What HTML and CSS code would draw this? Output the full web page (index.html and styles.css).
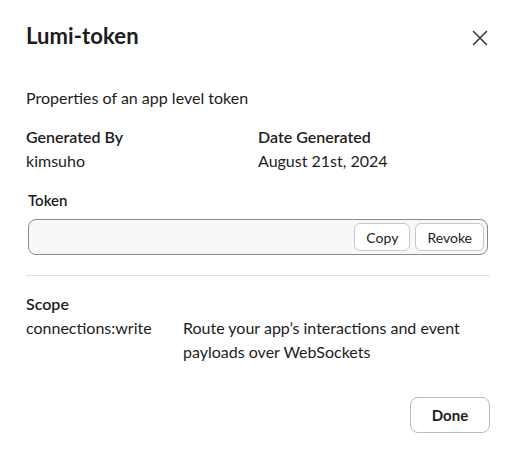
FILE: index.html
```html
<!DOCTYPE html>
<html>
<head>
<meta charset="utf-8">
<link rel="stylesheet" href="styles.css">
</head>
<body>
<div class="modal">
  <div class="header">
    <h1 class="title">Lumi-token</h1>
    <button class="close" aria-label="Close">
      <svg width="16" height="16" viewBox="0 0 16 16"><path d="M1.5 1.5 L14.5 14.5 M14.5 1.5 L1.5 14.5" stroke="#3a3a3a" stroke-width="1.6" stroke-linecap="round" fill="none"/></svg>
    </button>
  </div>
  <p class="desc">Properties of an app level token</p>
  <div class="meta">
    <div class="meta-col">
      <div class="label">Generated By</div>
      <div class="value">kimsuho</div>
    </div>
    <div class="meta-col">
      <div class="label">Date Generated</div>
      <div class="value">August 21st, 2024</div>
    </div>
  </div>
  <div class="token">
    <div class="label">Token</div>
    <div class="token-box">
      <div class="token-value"></div>
      <button class="btn-sm">Copy</button>
      <button class="btn-sm">Revoke</button>
    </div>
  </div>
  <hr class="divider">
  <div class="scope">
    <div class="label">Scope</div>
    <div class="scope-row">
      <div class="scope-name">connections:write</div>
      <div class="scope-desc">Route your app’s interactions and event payloads over WebSockets</div>
    </div>
  </div>
  <div class="footer">
    <button class="done">Done</button>
  </div>
</div>
</body>
</html>
```
FILE: styles.css
```css
* { box-sizing: border-box; }
html, body { margin: 0; padding: 0; background: #fff; }
body {
  font-family: Lato, "Noto Sans", sans-serif;
  color: #1d1c1d;
  width: 515px;
  height: 453px;
  overflow: hidden;
}
.modal {
  padding: 20px 25px 0 26px;
}
.header {
  display: flex;
  justify-content: space-between;
  align-items: center;
  height: 30px;
}
.title {
  margin: 0;
  font-size: 22px;
  font-weight: 700;
  letter-spacing: 0.1px;
}
.close {
  border: none;
  background: none;
  padding: 0;
  width: 16px;
  height: 16px;
  margin-right: 2px;
  margin-top: 6px;
  display: flex;
}
.desc {
  margin: 37px 0 0;
  font-size: 16px;
  line-height: 22px;
}
.meta {
  display: grid;
  grid-template-columns: 232px 1fr;
  margin-top: 17px;
}
.label {
  font-size: 16px;
  font-weight: 600;
  line-height: 22px;
}
.value {
  font-size: 16px;
  line-height: 26px;
}
.token {
  margin-top: 16px;
  padding-left: 2px;
}
.token .label { line-height: 20px; font-size: 15px; }
.token-box {
  margin-top: 9px;
  width: 460px;
  height: 36px;
  border: 1px solid #8a8a8a;
  border-radius: 8px;
  background: #f8f8f8;
  display: flex;
  align-items: center;
  gap: 5px;
  padding: 0 3px 0 0;
}
.token-value { flex: 1; }
.btn-sm {
  font-family: Lato, sans-serif;
  font-size: 14px;
  color: #1d1c1d;
  background: #fff;
  border: 1px solid #c8c8c8;
  border-radius: 6px;
  height: 28px;
  padding: 0 11px;
}
.divider {
  border: none;
  border-top: 1px solid #e2e2e2;
  margin: 20px 0 0;
  width: 464px;
}
.scope {
  margin-top: 18px;
}
.scope .label { line-height: 20px; }
.scope-row {
  display: grid;
  grid-template-columns: 157px 1fr;
  font-size: 16px;
  line-height: 24px;
  margin-top: 2px;
}
.scope-desc { width: 300px; }
.footer {
  display: flex;
  justify-content: flex-end;
  margin-top: 33px;
}
.done {
  font-family: Lato, sans-serif;
  font-size: 15px;
  font-weight: 700;
  color: #1d1c1d;
  background: #fff;
  border: 1px solid #bcbcbc;
  border-radius: 8px;
  width: 80px;
  height: 36px;
}
```
